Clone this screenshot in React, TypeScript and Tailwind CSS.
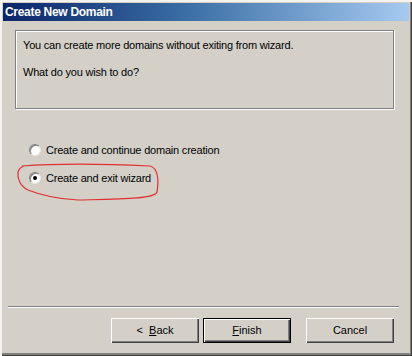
import React from 'react';

const font = { fontFamily: '"Liberation Sans", Arial, sans-serif' };

function Radio({ checked, label }: { checked: boolean; label: string }) {
    return (
        <div className="flex items-center h-[14px]">
            <span className="relative w-[12px] h-[12px] rounded-full bg-white shadow-[inset_1px_1px_0_#808080,inset_-1px_-1px_0_#ffffff] border border-t-[#808080] border-l-[#808080] border-r-[#e8e6e0] border-b-[#e8e6e0] flex items-center justify-center">
                {checked && <span className="w-[4px] h-[4px] rounded-full bg-black" />}
            </span>
            <span className="ml-[5px] text-[11px] tracking-[-0.2px] text-black leading-[14px]">{label}</span>
        </div>
    );
}

function Button({ children, isDefault }: { children: React.ReactNode; isDefault?: boolean }) {
    return (
        <div
            className={
                'w-[88px] h-[25px] flex items-center justify-center bg-[#d4d0c8] text-[11px] text-black ' +
                (isDefault
                    ? 'border border-black shadow-[inset_1px_1px_0_#ffffff,inset_-1px_-1px_0_#404040,inset_-2px_-2px_0_#808080]'
                    : 'shadow-[inset_1px_1px_0_#ffffff,inset_-1px_-1px_0_#404040,inset_-2px_-2px_0_#808080]')
            }
        >
            {children}
        </div>
    );
}

export default function App() {
    return (
        <div
            className="relative w-[412px] h-[356px] bg-[#d4d0c8] flex flex-col overflow-hidden shadow-[inset_2px_2px_0_#f4f3ef,inset_-1px_-1px_0_#404040,inset_-2px_-3px_0_#808080]"
            style={font}
        >
            {/* Title bar */}
            <div className="mt-[3px] mx-[3px] h-[18px] flex items-center pl-[2px] bg-[linear-gradient(90deg,#0a246a_0%,#3a6ea5_45%,#a6caf0_100%)]">
                <span className="text-white font-bold text-[12px] tracking-[-0.3px]">Create New Domain</span>
            </div>

            {/* Info group */}
            <div className="ml-[15px] mt-[9px] w-[379px] h-[79px] border border-[#808080] shadow-[1px_1px_0_#ffffff,inset_1px_1px_0_#ffffff] pl-[7px] pt-[8px] text-[11px] tracking-[-0.2px] leading-[13px] text-black">
                <p>You can create more domains without exiting from wizard.</p>
                <p className="mt-[14px]">What do you wish to do?</p>
            </div>

            {/* Options */}
            <div className="ml-[29px] mt-[34px] flex flex-col gap-[14px]">
                <Radio checked={false} label="Create and continue domain creation" />
                <Radio checked label="Create and exit wizard" />
            </div>

            <div className="flex-1" />

            {/* Separator */}
            <div className="mx-[8px] w-[391px] h-[2px] border-t border-[#808080] border-b border-b-white" />

            {/* Buttons */}
            <div className="flex items-center ml-[111px] mt-[10px] mb-[13px]">
                <Button>
                    <span>&lt;&nbsp;&nbsp;<u>B</u>ack</span>
                </Button>
                <div className="ml-[4px]">
                    <Button isDefault>
                        <span><u>F</u>inish</span>
                    </Button>
                </div>
                <div className="ml-[15px]">
                    <Button>Cancel</Button>
                </div>
            </div>

            {/* Red hand-drawn annotation */}
            <svg className="absolute left-0 top-0 pointer-events-none" width="412" height="356" viewBox="0 0 412 356">
                <path
                    d="M22 166 C 60 163, 110 164, 150 166 C 158 168, 159 180, 157 192 C 155 199, 120 199, 78 200 C 55 199, 38 194, 28 190 C 20 186, 17 178, 18 172 C 19 168, 21 167, 24 166"
                    fill="none"
                    stroke="#e03030"
                    strokeWidth="1.2"
                />
            </svg>
        </div>
    );
}
